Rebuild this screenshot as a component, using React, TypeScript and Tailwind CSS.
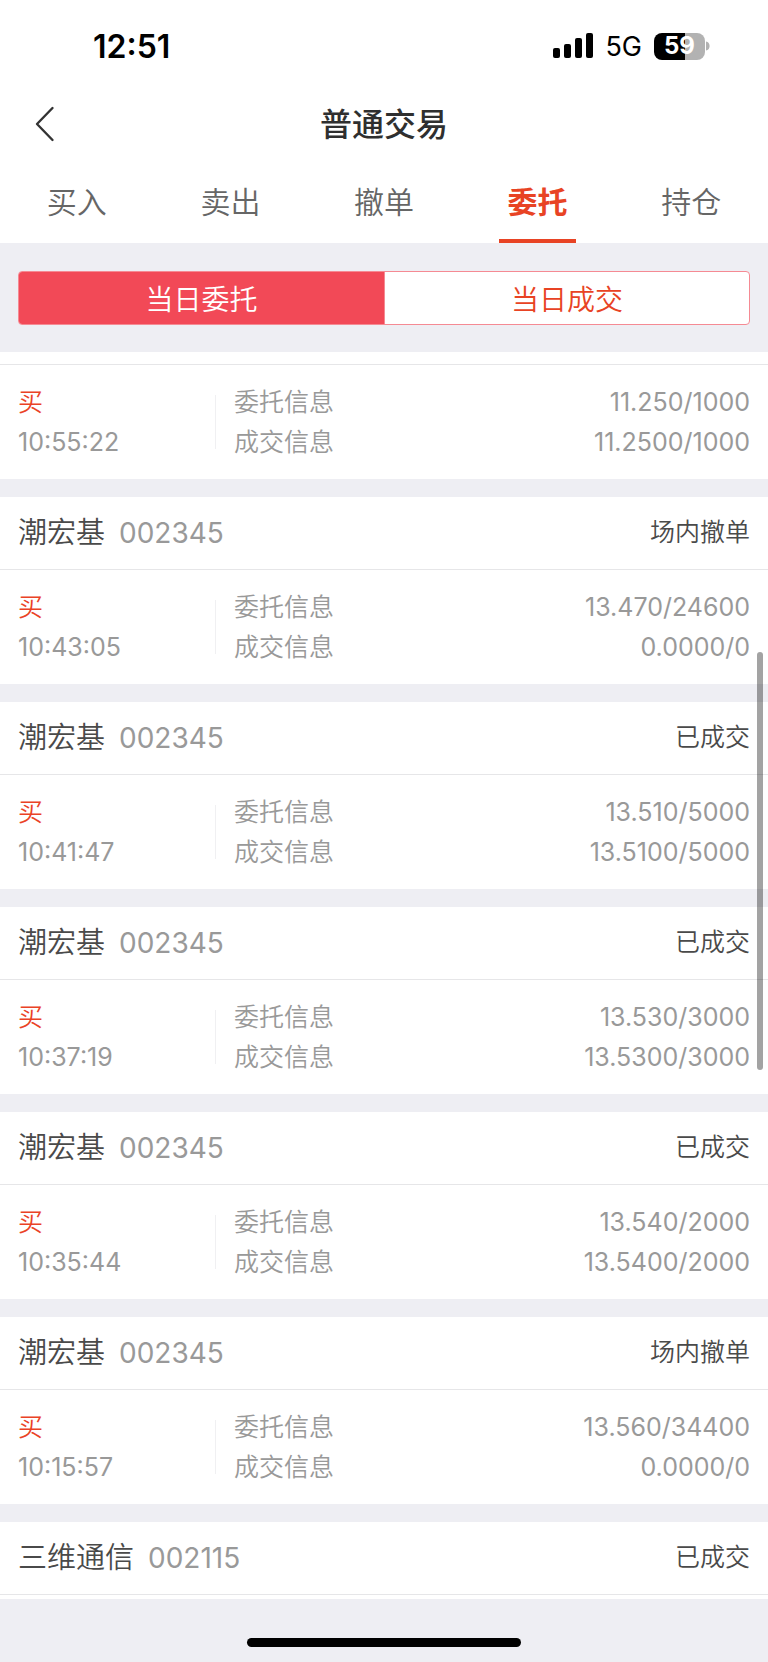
const tabs = ["买入", "卖出", "撤单", "委托", "持仓"];

type Order = {
  name?: string;
  code?: string;
  status?: string;
  time?: string;
  entrust?: string;
  deal?: string;
};

const orders: Order[] = [
  { time: "10:55:22", entrust: "11.250/1000", deal: "11.2500/1000" },
  { name: "潮宏基", code: "002345", status: "场内撤单", time: "10:43:05", entrust: "13.470/24600", deal: "0.0000/0" },
  { name: "潮宏基", code: "002345", status: "已成交", time: "10:41:47", entrust: "13.510/5000", deal: "13.5100/5000" },
  { name: "潮宏基", code: "002345", status: "已成交", time: "10:37:19", entrust: "13.530/3000", deal: "13.5300/3000" },
  { name: "潮宏基", code: "002345", status: "已成交", time: "10:35:44", entrust: "13.540/2000", deal: "13.5400/2000" },
  { name: "潮宏基", code: "002345", status: "场内撤单", time: "10:15:57", entrust: "13.560/34400", deal: "0.0000/0" },
  { name: "三维通信", code: "002115", status: "已成交" },
];

function StatusBar() {
  return (
    <div className="flex h-[92px] items-center justify-between pl-[93px] pr-[58px] text-black">
      <span className="pt-0.5 text-[32px] font-semibold leading-10">12:51</span>
      <div className="flex items-center gap-3">
        <svg width="40" height="26" viewBox="0 0 40 26" aria-hidden="true">
          <rect x="0" y="15" width="7" height="10" rx="2" />
          <rect x="11" y="11" width="7" height="14" rx="2" />
          <rect x="22" y="5" width="7" height="20" rx="2" />
          <rect x="33" y="0" width="7" height="25" rx="2" />
        </svg>
        <span className="pt-0.5 text-[27px] leading-10">5G</span>
        <div className="flex items-center gap-px">
          <div className="flex h-[27px] w-[51px] items-center justify-center rounded-[8px] bg-linear-to-r from-black from-60% to-[#b2b2b2] to-60% text-2xl font-bold leading-none text-white">
            59
          </div>
          <svg width="4" height="10" viewBox="0 0 4 10" aria-hidden="true">
            <path d="M0 0.5C2.4 1 3.6 2.8 3.6 5S2.4 9 0 9.5Z" fill="#b2b2b2" />
          </svg>
        </div>
      </div>
    </div>
  );
}

function OrderCard({ order }: { order: Order }) {
  return (
    <li className="bg-white">
      {order.name ? (
        <div className="flex h-[73px] items-center justify-between border-b border-[#e6e6e8] px-[18px]">
          <h2 className="flex items-center gap-3.5 text-[#4a4a4a]">
            <span className="text-[29px] font-[350]">{order.name}</span>
            <span className="text-[28px] text-[#999999]">{order.code}</span>
          </h2>
          <span className="text-[25px] font-[350] text-[#4a4a4a]">{order.status}</span>
        </div>
      ) : (
        <div className="h-[13px] border-b border-[#e6e6e8]" />
      )}
      {order.time ? (
        <div className="grid grid-cols-[28%_1fr] items-center py-[17px] text-[25px] leading-10 text-[#999999]">
          <div className="pl-[18px]">
            <p className="font-[350] text-[#ea4226]">买</p>
            <p>{order.time}</p>
          </div>
          <div className="flex items-center pr-[18px]">
            <div className="h-[54px] w-px bg-[#f0f0f2]" />
            <dl className="flex-1 pl-[18px]">
              <div className="flex justify-between">
                <dt className="font-[350]">委托信息</dt>
                <dd>{order.entrust}</dd>
              </div>
              <div className="flex justify-between">
                <dt className="font-[350]">成交信息</dt>
                <dd>{order.deal}</dd>
              </div>
            </dl>
          </div>
        </div>
      ) : (
        <div className="h-1" />
      )}
    </li>
  );
}

export default function App() {
  return (
    <div className="flex min-h-screen flex-col bg-[#eeeef3] font-[Inter,'Noto_Sans_CJK_SC',sans-serif]">
      <header className="bg-white">
        <StatusBar />
        <div className="grid h-16 grid-cols-[1fr_auto_1fr] items-center px-[34px]">
          <button type="button" aria-label="返回" className="justify-self-start">
            <svg width="22" height="36" viewBox="0 0 22 36" fill="none" stroke="#333333" strokeWidth="2.4" strokeLinecap="round" strokeLinejoin="round">
              <path d="M18.500 2L3 18L18.500 34" />
            </svg>
          </button>
          <h1 className="pt-0.5 text-[32px] font-medium text-[#2f2f2f]">普通交易</h1>
        </div>
        <nav className="grid h-[87px] grid-cols-5">
          {tabs.map((tab) =>
            tab === "委托" ? (
              <a key={tab} href="#" aria-current="page" className="flex justify-center text-[30px] font-bold text-[#e84324]">
                <span className="flex w-1/2 items-center justify-center border-b-4 border-[#e84324] pt-2.5">{tab}</span>
              </a>
            ) : (
              <a key={tab} href="#" className="flex items-center justify-center pt-1.5 text-[30px] font-[350] text-[#666666]">
                {tab}
              </a>
            ),
          )}
        </nav>
      </header>

      <div className="px-[18px] pb-[27px] pt-7">
        <div className="grid h-[54px] grid-cols-2 overflow-hidden rounded-[4px] border border-[#f58a93] bg-white text-[28px] font-[350]">
          <button type="button" aria-pressed="true" className="bg-[#f24957] pt-1 text-white">当日委托</button>
          <button type="button" aria-pressed="false" className="border-l border-[#f58a93] pt-1 text-[#e84324]">当日成交</button>
        </div>
      </div>

      <main className="relative">
        <ul className="flex flex-col gap-[18px]">
          {orders.map((order, index) => (
            <OrderCard key={index} order={order} />
          ))}
        </ul>
        <div className="absolute right-[5px] top-[300px] h-[418px] w-1.5 rounded-full bg-black/36" />
      </main>

      <footer className="flex justify-center pb-[15px] pt-[39px]">
        <div className="h-[9px] w-[274px] rounded-full bg-black" />
      </footer>
    </div>
  );
}
